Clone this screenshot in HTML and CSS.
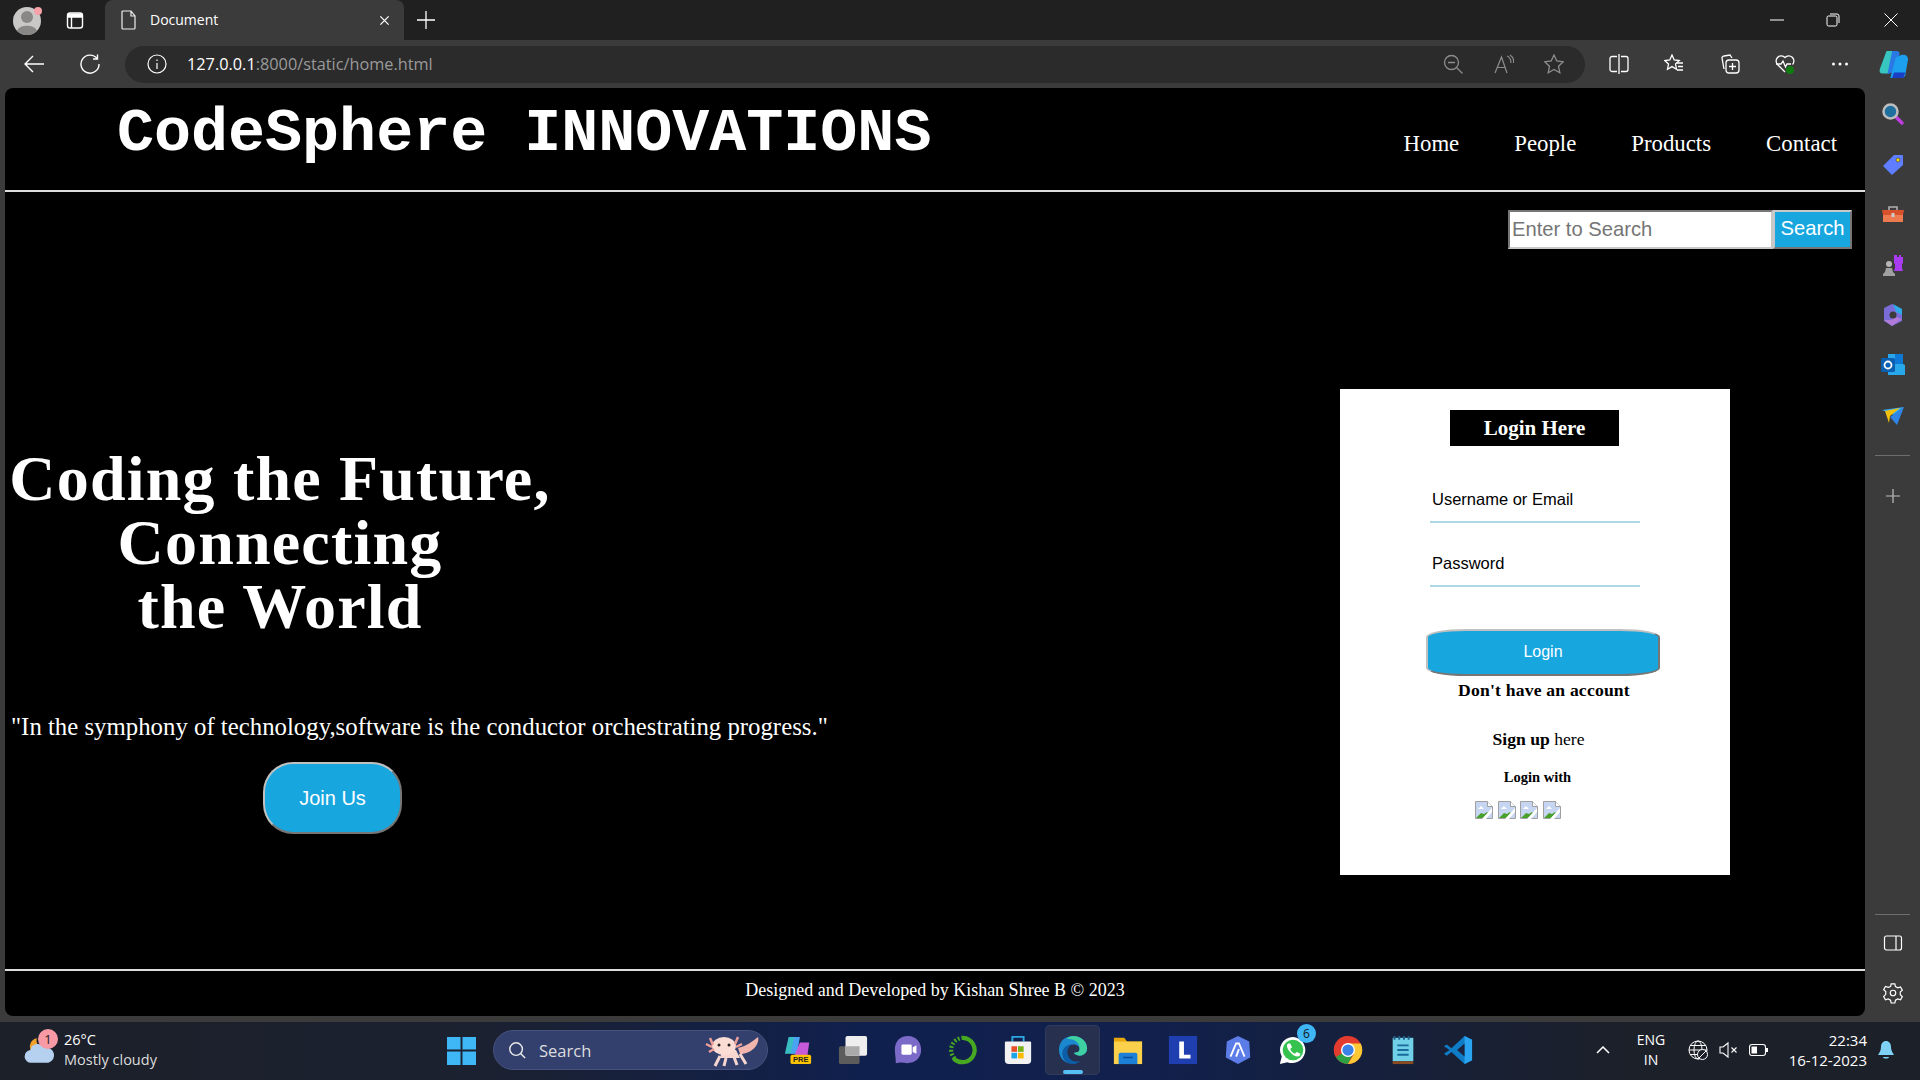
FILE: index.html
```html
<!DOCTYPE html>
<html lang="en">
<head>
<meta charset="utf-8">
<title>Document</title>
<link rel="stylesheet" href="styles.css">
</head>
<body>
<div class="desktop">
  <div class="tabstrip">
    <svg class="avatar" viewBox="0 0 30 30"><circle cx="14" cy="16" r="14" fill="#c9c8c6"/><circle cx="14" cy="12" r="6" fill="#8a8886"/><path d="M4 26c2-7 18-7 20 0a14 14 0 0 1-20 0z" fill="#8a8886"/><circle cx="25" cy="6" r="4" fill="#f7a1a8"/></svg>
    <svg class="ico tabs-ico" viewBox="0 0 20 20" fill="none" stroke="#fff" stroke-width="1.4"><rect x="2.5" y="3" width="15" height="15" rx="2.5"/><path d="M6.5 7v11M2.5 7h15" /><path d="M3 3.5h14v3.5H3z" fill="#fff" stroke="none"/></svg>
    <div class="tab">
      <svg class="ico16" viewBox="0 0 16 20" fill="none" stroke="#eee" stroke-width="1.2"><path d="M2 1h8l4 5v12a1 1 0 0 1-1 1H2a1 1 0 0 1-1-1V2a1 1 0 0 1 1-1zM10 1v5h4"/></svg>
      <span class="tab-title">Document</span>
      <svg class="tab-x" viewBox="0 0 12 12" fill="none" stroke="#fff" stroke-width="1.4"><path d="M1.5 1.5l9 9M10.5 1.5l-9 9"/></svg>
    </div>
    <svg class="newtab" viewBox="0 0 18 18" fill="none" stroke="#fff" stroke-width="1.3"><path d="M9 0v18M0 9h18"/></svg>
    <div class="winctl">
      <svg viewBox="0 0 14 14" fill="none" stroke="#fff"><path d="M0 7h14"/></svg>
      <svg viewBox="0 0 14 14" fill="none" stroke="#fff"><rect x="1" y="3" width="10" height="10" rx="1.5"/><path d="M4 1h7a2 2 0 0 1 2 2v7"/></svg>
      <svg viewBox="0 0 14 14" fill="none" stroke="#fff"><path d="M.5.5l13 13M13.5.5l-13 13"/></svg>
    </div>
  </div>

  <div class="toolbar">
    <svg class="ico back" viewBox="0 0 20 20" fill="none" stroke="#fff" stroke-width="1.4"><path d="M20 10H1M9 2l-8 8 8 8"/></svg>
    <svg class="ico reload" viewBox="0 0 20 20" fill="none" stroke="#fff" stroke-width="1.4"><path d="M17 4.5A9 9 0 1 0 19 10M17.500 .5v4.500H13"/></svg>
    <div class="address">
      <svg class="ico info" viewBox="0 0 20 20" fill="none" stroke="#fff" stroke-width="1.2"><circle cx="10" cy="10" r="9"/><path d="M10 9v6M10 5.500v1.500"/></svg>
      <span class="url"><span class="url-host">127.0.0.1</span>:8000/static/home.html</span>
      <div class="addr-right">
        <svg class="ico" viewBox="0 0 20 20" fill="none" stroke="#8d8d8d" stroke-width="1.3"><circle cx="8.500" cy="8.500" r="7"/><path d="M5 8.500h7M13.500 13.500l6 6"/></svg>
        <svg class="ico" viewBox="0 0 20 20" fill="none" stroke="#8d8d8d" stroke-width="1.2"><path d="M1 19L7.500 3 13 19M3.500 13.500h8M13 2c3 1 4 4 4 7M16 1c3 2 4 5 3.500 8"/></svg>
        <svg class="ico" viewBox="0 0 20 20" fill="none" stroke="#8d8d8d" stroke-width="1.3"><path d="M10 1l2.800 6 6.500.8-4.800 4.400 1.300 6.500L10 15.400l-5.800 3.300 1.300-6.500L.7 7.800 7.200 7z"/></svg>
      </div>
    </div>
    <div class="tools">
      <svg class="ico" viewBox="0 0 20 20" fill="none" stroke="#fff" stroke-width="1.3"><rect x="1" y="2.500" width="18" height="15" rx="2"/><path d="M10 0v20" stroke="#3b3b3b" stroke-width="4"/><path d="M10 0v20"/></svg>
      <svg class="ico" viewBox="0 0 20 20" fill="none" stroke="#fff" stroke-width="1.3"><path d="M8 1l2.200 5 5 .6-3.700 3.400 1 5.200L8 12.600l-4.500 2.600 1-5.200L.8 6.600l5-.6z"/><path d="M13 9h6M14 12.500h5M13 16h6"/></svg>
      <svg class="ico" viewBox="0 0 20 20" fill="none" stroke="#fff" stroke-width="1.3"><path d="M4 15L2 4a2 2 0 0 1 2-2l6-1 2 3"/><rect x="6" y="6" width="13" height="13" rx="3"/><path d="M12.500 9v7M9 12.500h7"/></svg>
      <svg class="ico" viewBox="0 0 20 20" fill="none" stroke="#fff" stroke-width="1.3"><path d="M10 18L2.500 10.500a5 5 0 0 1 7.500-7 5 5 0 0 1 7.500 7"/><path d="M1 10h5l2-3 2.500 6L12 10h4"/><circle cx="15" cy="16" r="4" fill="#107c10" stroke="none"/></svg>
      <svg class="ico" viewBox="0 0 20 20" fill="#fff"><circle cx="3.500" cy="10" r="1.500"/><circle cx="10" cy="10" r="1.500"/><circle cx="16.500" cy="10" r="1.500"/></svg>
      <svg class="copilot" viewBox="0 0 32 32"><path d="M8 2h10l-8 24H3C1 26 0 24 1 21z" fill="#37c6c0"/><path d="M14 2h5c2 0 3 1 3 3l-5 19-8 3z" fill="#2a78e4"/><path d="M24 6h2c3 0 5 2 5 5l-3 17c-1 2-2 3-4 3H12l6-22z" fill="#1c9fef"/><path d="M14 31h12l2-6H16z" fill="#1b3fc4"/></svg>
    </div>
  </div>

  <div class="workspace">
    <div class="page">
      <header class="site-header">
        <h1 class="brand">CodeSphere INNOVATIONS</h1>
        <nav class="site-nav"><a>Home</a><a>People</a><a>Products</a><a>Contact</a></nav>
      </header>
      <div class="search-row">
        <span class="search-input">Enter to Search</span><span class="search-btn">Search</span>
      </div>
      <main class="hero-row">
        <section class="hero">
          <h2 class="hero-title">Coding the Future,<br>Connecting<br>the World</h2>
          <p class="hero-quote">"In the symphony of technology,software is the conductor orchestrating progress."</p>
          <span class="join">Join Us</span>
        </section>
        <aside class="login">
          <h3 class="login-title">Login Here</h3>
          <div class="field">Username or Email</div>
          <div class="field">Password</div>
          <div class="login-btn">Login</div>
          <p class="no-account">Don't have an account</p>
          <p class="signup"><b>Sign up</b> here</p>
          <p class="login-with">Login with</p>
          <div class="socials">
            <svg class="broken" viewBox="0 0 18 18"><path d="M.5.500h12l5 5v12H.5z" fill="#c6d6f2" stroke="#a0a0a0"/><path d="M12.500.5v5h5" fill="#fff" stroke="#a0a0a0"/><path d="M3 8l3-3 3 3z" fill="#fff"/><path d="M1 17l5-5 3 1 3-2 1 1-5 5z" fill="#4aa02c"/><path d="M17 7L7 18h4l6-7z" fill="#fff"/></svg>
            <svg class="broken" viewBox="0 0 18 18"><path d="M.5.500h12l5 5v12H.5z" fill="#c6d6f2" stroke="#a0a0a0"/><path d="M12.500.5v5h5" fill="#fff" stroke="#a0a0a0"/><path d="M3 8l3-3 3 3z" fill="#fff"/><path d="M1 17l5-5 3 1 3-2 1 1-5 5z" fill="#4aa02c"/><path d="M17 7L7 18h4l6-7z" fill="#fff"/></svg>
            <svg class="broken" viewBox="0 0 18 18"><path d="M.5.500h12l5 5v12H.5z" fill="#c6d6f2" stroke="#a0a0a0"/><path d="M12.500.5v5h5" fill="#fff" stroke="#a0a0a0"/><path d="M3 8l3-3 3 3z" fill="#fff"/><path d="M1 17l5-5 3 1 3-2 1 1-5 5z" fill="#4aa02c"/><path d="M17 7L7 18h4l6-7z" fill="#fff"/></svg>
            <svg class="broken" viewBox="0 0 18 18"><path d="M.5.500h12l5 5v12H.5z" fill="#c6d6f2" stroke="#a0a0a0"/><path d="M12.500.5v5h5" fill="#fff" stroke="#a0a0a0"/><path d="M3 8l3-3 3 3z" fill="#fff"/><path d="M1 17l5-5 3 1 3-2 1 1-5 5z" fill="#4aa02c"/><path d="M17 7L7 18h4l6-7z" fill="#fff"/></svg>
          </div>
        </aside>
      </main>
      <footer class="site-footer">Designed and Developed by Kishan Shree B © 2023</footer>
    </div>
    <aside class="sidebar">
      <svg class="side-ico" viewBox="0 0 24 24"><path d="M14 14l7 7" stroke="#c03ee0" stroke-width="3.500" stroke-linecap="round"/><circle cx="9.500" cy="9.500" r="7" fill="#1f6f9f" stroke="#bdbdbd" stroke-width="2.500"/></svg>
      <svg class="side-ico" viewBox="0 0 24 24"><path d="M2 14L13 3h8a1 1 0 0 1 1 1v9L11 23z" fill="#5f7dff"/><circle cx="17" cy="8" r="2" fill="#f5d90a" stroke="#333" stroke-width=".6"/></svg>
      <svg class="side-ico" viewBox="0 0 24 24"><path d="M8 7V4h8v3" fill="none" stroke="#b0b0b0" stroke-width="1.600"/><path d="M1 7h22l-1 5H2z" fill="#d9502c"/><path d="M2 12h20v7H2z" fill="#ee7b50"/><rect x="10.500" y="10" width="3" height="4" fill="#ccc"/></svg>
      <svg class="side-ico" viewBox="0 0 24 24"><circle cx="8" cy="11" r="3" fill="#b5b5b5"/><path d="M5 15h6l1 4 2 2v2H2v-2l2-2z" fill="#a0a0a0"/><path d="M14 2h2v2h2V2h2v2h2V2v8l-1 1v4l1 3H13l1-3v-4l-1-1V2z" fill="#a93cf0"/></svg>
      <svg class="side-ico" viewBox="0 0 24 24"><path d="M11 1L3 5v13l8 5 10-5V7z" fill="#7a6cd6"/><path d="M12 1l9 5v6l-6-3z" fill="#2fa9e8"/><path d="M3 17l8 6 10-7-6-2-5 3z" fill="#b07ad8"/><circle cx="12" cy="12" r="3.500" fill="#3b3b3b"/></svg>
      <svg class="side-ico" viewBox="0 0 24 24"><path d="M7 1h15v10l2 1v10H7z" fill="#28a8ea"/><path d="M14 1h8v10h-8z" fill="#0f78d4"/><rect x="0" y="5" width="14" height="14" rx="1.500" fill="#0a5fb0"/><circle cx="7" cy="12" r="3.500" fill="none" stroke="#fff" stroke-width="1.800"/></svg>
      <svg class="side-ico" viewBox="0 0 24 24"><path d="M1 6l22-3-10 8z" fill="#36a9f0"/><path d="M23 3L16 21 9 13z" fill="#2f86e6"/><path d="M4 7l15-3-10 8-1 7z" fill="#f4c20d"/></svg>
      <div class="side-sep"></div>
      <svg class="side-plus" viewBox="0 0 16 16" fill="none" stroke="#c0c0c0" stroke-width="1.200"><path d="M8 1v14M1 8h14"/></svg>
      <div class="side-sep side-sep-bottom"></div>
      <svg class="side-bt" viewBox="0 0 20 20" fill="none" stroke="#fff" stroke-width="1.200"><rect x="1.500" y="3" width="17" height="14" rx="2"/><path d="M13 3v14"/></svg>
      <svg class="side-bt side-gear" viewBox="0 0 24 24" fill="none" stroke="#fff" stroke-width="1.300"><circle cx="12" cy="12" r="3"/><path d="M10 2h4l.7 3 2.500 1.400 3-1 2 3.500-2.300 2.100v2.900l2.300 2.100-2 3.500-3-1-2.500 1.400-.7 3h-4l-.7-3-2.500-1.400-3 1-2-3.500L4.100 13.400v-2.900L1.800 8.400l2-3.500 3 1L9.300 5z"/></svg>
    </aside>
  </div>

  <div class="taskbar">
    <div class="weather">
      <svg class="weather-ico" viewBox="0 0 32 32"><path d="M7 16a8 8 0 0 1 6-11 8 8 0 0 0 8 10z" fill="#f0a32c"/><path d="M8 28a6 6 0 0 1-1-12 7 7 0 0 1 13-2 6 6 0 0 1 4 14z" fill="#b6d0ef"/></svg>
      <span class="badge">1</span>
      <div class="weather-text"><span class="temp">26°C</span><span class="cond">Mostly cloudy</span></div>
    </div>
    <div class="tb-center">
      <svg class="start" viewBox="0 0 30 30"><path d="M0 1h14v13H0zM16 1h14v13H16zM0 16h14v14H0zM16 16h14v14H16z" fill="#3fb6f5"/></svg>
      <div class="tb-search">
        <svg class="tb-search-ico" viewBox="0 0 20 20" fill="none" stroke="#e8e8e8" stroke-width="1.600"><circle cx="9" cy="9" r="7"/><path d="M14 14l5 5"/></svg>
        <span>Search</span>
        <svg class="axolotl" viewBox="0 0 56 36"><path d="M34 16C42 14 48 10 54 5 56 12 48 22 36 22z" fill="#f2b5ae"/><path d="M16 24l-5 10M22 26l-2 8M30 25l3 8M36 22l6 10" stroke="#f7d6cf" stroke-width="3"/><path d="M18 18l14 0 4 8H16z" fill="#f7d6cf"/><ellipse cx="20" cy="14" rx="12" ry="9" fill="#fbdcd4"/><path d="M6 6l3 7M2 12l6 3M5 20l5-3M34 5l-3 7M38 12l-6 3" stroke="#ee9f98" stroke-width="2.500"/><circle cx="15" cy="13" r="1.500" fill="#222"/><circle cx="25" cy="13" r="1.500" fill="#222"/></svg>
      </div>
      <div class="apps">
        <span class="app"><svg viewBox="0 0 32 32"><path d="M6 2h10l-4 18H2z" fill="#38bdc2"/><path d="M12 2h6l-3 18H8z" fill="#4aa3f0"/><path d="M18 8h10l-2 14H12z" fill="#c65ad8"/><rect x="8" y="21" width="22" height="10" rx="2" fill="#ffc300"/><text x="19" y="29" class="pre">PRE</text></svg></span>
        <span class="app"><svg viewBox="0 0 32 32"><rect x="1" y="12" width="22" height="19" rx="2" fill="#5c5c5c"/><rect x="8" y="1" width="23" height="21" rx="2" fill="#eee"/><rect x="8" y="12" width="15" height="10" fill="#aaa"/></svg></span>
        <span class="app"><svg viewBox="0 0 32 32"><path d="M16 1C7 1 2 7 2 16c0 4 1 8 1 14 4-1 7-1 12 0 9 0 15-6 15-14S25 1 16 1z" fill="#7b6ac8"/><rect x="9" y="10" width="11" height="11" rx="1.500" fill="#fff"/><path d="M21 13l4-2v9l-4-2z" fill="#fff"/></svg></span>
        <span class="app"><svg viewBox="0 0 32 32" fill="none"><path d="M16 3a13 13 0 1 1-10 22" stroke="#47a822" stroke-width="4.500"/><path d="M7 25A13 13 0 0 1 16 3" stroke="#47a822" stroke-width="4.500" stroke-dasharray="2 2"/></svg></span>
        <span class="app"><svg viewBox="0 0 32 32"><path d="M10 7V2h12v5" fill="none" stroke="#2ea8e0" stroke-width="2"/><path d="M3 7h26a1 1 0 0 1 1 1v19a4 4 0 0 1-4 4H6a4 4 0 0 1-4-4V8a1 1 0 0 1 1-1z" fill="#f2f2f2"/><rect x="9" y="12" width="6" height="6" fill="#e8502a"/><rect x="16" y="12" width="6" height="6" fill="#78b21a"/><rect x="9" y="19" width="6" height="6" fill="#1ea5e8"/><rect x="16" y="19" width="6" height="6" fill="#fcb900"/></svg></span>
        <span class="app app-active"><svg viewBox="0 0 32 32"><path d="M1 16C1 6 8 1 16 1c9 0 15 6 15 13 0 5-4 8-8 8-3 0-6-2-6-3 3 0 6-1 6-4s-3-5-7-5C9 10 5 14 5 20c0 6 5 11 11 11C8 31 1 25 1 16z" fill="#1b87cf"/><path d="M16 1c9 0 15 6 15 13 0 5-4 8-8 8-3 0-6-2-6-3 3 0 6-1 6-4C23 8 18 4 9 4c2-2 5-3 7-3z" fill="#3ed0a0"/><path d="M5 20c0-6 4-10 10-10-4 2-5 5-5 8 0 6 5 12 14 10-3 2-5 3-8 3-6 0-11-5-11-11z" fill="#0c5ea8"/></svg></span>
        <span class="app"><svg viewBox="0 0 32 32"><path d="M1 3h11l3 4h16v24H1z" fill="#e8a80c"/><path d="M1 7h30v24H1z" fill="#fbd04b"/><path d="M8 19h16a2 2 0 0 1 2 2v10H6V21a2 2 0 0 1 2-2z" fill="#1c80d8"/><path d="M11 24h10" stroke="#0c4a90" stroke-width="1.500"/></svg></span>
        <span class="app"><svg viewBox="0 0 32 32"><rect x="1" y="1" width="30" height="30" fill="#1f3fb0"/><path d="M12 7h5v14h7v4H12z" fill="#fff"/></svg></span>
        <span class="app"><svg viewBox="0 0 32 32"><path d="M16 1l12 6 1 17-13 7-13-7 1-17z" fill="#5c7de8"/><path d="M8 23l6-14h3l6 14M14 23l3-8" fill="none" stroke="#fff" stroke-width="2"/></svg></span>
        <span class="app"><svg viewBox="0 0 32 32"><path d="M16 2a14 14 0 0 0-12 21L2 31l8-2A14 14 0 1 0 16 2z" fill="#fff"/><circle cx="16" cy="16" r="11" fill="#35c24f"/><path d="M11 9c-2 1-2 4 1 8s6 6 9 6c2 0 3-2 3-3l-4-2-2 2c-3-1-4-3-5-5l2-2-2-4z" fill="#fff"/></svg><span class="wa-badge">6</span></span>
        <span class="app"><svg viewBox="0 0 32 32"><circle cx="16" cy="16" r="15" fill="#e33b2e"/><path d="M16 16L3 23.500A15 15 0 0 0 16 31l6-13z" fill="#2ea044"/><path d="M16 9h13.500A15 15 0 0 1 16 31l6.500-11z" fill="#fcc934"/><path d="M16 1a15 15 0 0 0-13 22.500L9.500 12z" fill="#e33b2e"/><circle cx="16" cy="16" r="7.500" fill="#fff"/><circle cx="16" cy="16" r="6" fill="#3b82e8"/></svg></span>
        <span class="app"><svg viewBox="0 0 32 32"><rect x="5" y="3" width="22" height="25" fill="#6fd0e8"/><rect x="5" y="28" width="22" height="3" fill="#8a4b20"/><path d="M7 1v4M12 1v4M17 1v4M22 1v4" stroke="#1f5f88" stroke-width="2"/><path d="M10 11h12M10 16h12M10 21h12" stroke="#1a6a9a" stroke-width="2"/></svg></span>
        <span class="app"><svg viewBox="0 0 32 32"><path d="M23 1l8 4v22l-8 4L9 18l-5 4-3-2 6-4-6-4 3-2 5 4z" fill="#0f7cc8"/><path d="M23 1l8 4v22l-8 4z" fill="#2aa4f0"/><path d="M23 9l-8 7 8 7z" fill="#1a2440"/></svg></span>
      </div>
    </div>
    <div class="tray">
      <svg class="tray-caret" viewBox="0 0 14 8" fill="none" stroke="#fff" stroke-width="1.500"><path d="M1 7l6-6 6 6"/></svg>
      <div class="lang"><span>ENG</span><span>IN</span></div>
      <svg class="tray-ico" viewBox="0 0 20 20" fill="none" stroke="#fff" stroke-width="1"><circle cx="10" cy="10" r="9"/><ellipse cx="10" cy="10" rx="4" ry="9"/><path d="M1 10h18M2 5.500h16M2 14.500h16"/><circle cx="14.500" cy="14.500" r="5" fill="#1c202a"/><path d="M11 18l7-7"/></svg>
      <svg class="tray-ico tray-mute" viewBox="0 0 20 20" fill="none" stroke="#fff" stroke-width="1.100"><path d="M1 7h3l5-4v14l-5-4H1zM12.500 7.500l5 5M17.500 7.500l-5 5"/></svg>
      <svg class="tray-ico tray-bat" viewBox="0 0 20 20" fill="none" stroke="#fff" stroke-width="1.100"><rect x=".5" y="4.500" width="16" height="11" rx="2.500"/><rect x="2.500" y="6.500" width="5.500" height="7" fill="#fff" stroke="none"/><path d="M18 8v4" stroke-width="2"/></svg>
      <div class="clock"><span>22:34</span><span>16-12-2023</span></div>
      <svg class="bell" viewBox="0 0 18 20"><path d="M9 1c-3 0-5 2.500-5 6 0 4-2 6-3 8h16c-1-2-3-4-3-8 0-3.500-2-6-5-6z" fill="#7fd0f5"/><path d="M6 17h6c0 2-6 2-6 0z" fill="#7fd0f5"/></svg>
    </div>
  </div>
</div>
</body>
</html>
```
FILE: styles.css
```css
* { box-sizing: border-box; }
html, body { margin: 0; padding: 0; height: 100%; overflow: hidden; background: #3b3b3b; }
h1, h2, h3, p { margin: 0; }
svg { display: block; flex: none; }

.desktop { display: flex; flex-direction: column; width: 1920px; height: 1080px; }

/* browser tab strip */
.tabstrip { display: flex; align-items: center; height: 40px; background: #202020; font-family: "Open Sans", "Noto Sans", sans-serif; color: #fff; }
.avatar { width: 30px; height: 30px; margin-left: 13px; }
.ico { width: 20px; height: 20px; }
.tabs-ico { width: 20px; height: 20px; margin-left: 22px; }
.ico16 { width: 16px; height: 20px; }
.tab { display: flex; align-items: center; width: 299px; height: 40px; margin-left: 20px; padding: 0 14px 0 16px; background: #3b3b3b; border-radius: 8px 8px 0 0; }
.tab-title { margin-left: 13px; margin-top: -2px; font-size: 14px; }
.tab-x { width: 11px; height: 11px; margin-left: auto; }
.newtab { width: 18px; height: 18px; margin-left: 13px; }
.winctl { display: flex; gap: 44px; margin-left: auto; padding-right: 22px; }
.winctl svg { width: 14px; height: 14px; }
.winctl svg:first-child { margin-right: -2px; }

/* browser toolbar */
.toolbar { display: flex; align-items: center; height: 48px; background: #3b3b3b; }
.back { margin-left: 24px; }
.reload { margin-left: 36px; }
.address { display: flex; align-items: center; width: 1460px; height: 37px; margin: 0 0 0 25px; padding: 0 21px 0 22px; background: #2b2b2b; border-radius: 19px; }
.url { margin-left: 20px; font-family: "Open Sans", "Noto Sans", sans-serif; font-size: 16.300px; color: #9a9a9a; }
.url-host { color: #fff; }
.addr-right { display: flex; gap: 30.500px; margin-left: auto; }
.tools { display: flex; align-items: center; gap: 35.300px; margin-left: 24px; }
.copilot { width: 30px; height: 30px; margin-left: -6px; }

/* workspace */
.workspace { display: flex; height: 934px; padding-left: 5px; }
.page { display: flex; flex-direction: column; width: 1860px; height: 928px; background: #000; border-radius: 8px; color: #fff; overflow: hidden; }

.site-header { display: flex; justify-content: space-between; height: 104px; padding: 0 28px 0 112px; border-bottom: 2px solid #ddd; }
.brand { font-family: "Liberation Mono", monospace; font-weight: 700; font-size: 61.700px; line-height: 70px; padding-top: 11px; }
.site-nav { display: flex; gap: 55px; padding-top: 43px; font-family: "Liberation Serif", serif; font-size: 22.800px; line-height: 26px; }

.search-row { display: flex; justify-content: flex-end; height: 57px; padding: 18px 13px 0 0; font-family: "Liberation Sans", sans-serif; font-size: 20.200px; }
.search-input { width: 265px; height: 39px; padding: 0 2px; background: #fff; color: #757575; line-height: 35px; border: 2px solid; border-color: #767676 #c8c8c8 #c8c8c8 #767676; }
.search-btn { width: 79px; height: 39px; background: #18a6df; color: #fff; text-align: center; line-height: 33px; border: 2px solid; border-color: #c8c8c8 #767676 #767676 #c8c8c8; }

.hero-row { display: flex; justify-content: space-between; flex: 1; padding-right: 135px; }
.hero { width: 550px; padding-top: 198px; font-family: "Liberation Serif", serif; }
.hero-title { font-size: 64px; font-weight: 700; letter-spacing: 1.200px; line-height: 64px; text-align: center; }
.hero-quote { margin: 73px 0 0 6px; font-size: 24.800px; line-height: 30px; white-space: nowrap; }
.join { display: block; width: 139px; height: 72px; margin: 20px 0 0 258px; background: #18a6df; border: 2px solid; border-color: #c0c0c0 #767676 #767676 #c0c0c0; border-radius: 30px; font-family: "Liberation Sans", sans-serif; font-size: 20px; line-height: 68px; text-align: center; }

/* login card */
.login { display: flex; flex-direction: column; width: 390px; height: 486px; margin-top: 140px; padding-top: 21px; background: #fff; color: #000; font-family: "Liberation Serif", serif; }
.login-title { width: 169px; height: 36px; margin-left: 110px; background: #000; color: #fff; font-size: 21px; font-weight: 700; line-height: 36px; text-align: center; }
.field { width: 210px; height: 45px; margin: 32px 0 0 90px; padding: 0 2px; border-bottom: 2px solid #add8e6; font-family: "Liberation Sans", sans-serif; font-size: 16.500px; line-height: 43px; }
.field + .field { margin-top: 19px; }
.login-btn { width: 234px; height: 47px; margin: 42px 0 0 86px; background: #18a6df; border: 2px solid; border-color: #c0c0c0 #767676 #767676 #c0c0c0; border-radius: 40px / 8px; color: #fff; font-family: "Liberation Sans", sans-serif; font-size: 16px; line-height: 42px; text-align: center; }
.no-account { margin: 4px 0 0 0; padding-left: 18px; text-align: center; font-size: 17.600px; font-weight: 700; line-height: 21px; letter-spacing: .2px; }
.signup { margin-top: 28px; padding-left: 7px; text-align: center; font-size: 17.600px; line-height: 21px; }
.login-with { margin-top: 19px; padding-left: 5px; text-align: center; font-size: 14.500px; font-weight: 700; line-height: 17px; }
.socials { display: flex; gap: 4.500px; margin: 15px 0 0 135px; }
.broken { width: 18px; height: 18px; }

.site-footer { height: 47px; margin-top: auto; border-top: 2px solid #ddd; font-family: "Liberation Serif", serif; font-size: 18px; line-height: 38px; text-align: center; }

/* sidebar */
.sidebar { display: flex; flex-direction: column; align-items: center; width: 55px; height: 928px; padding-top: 14px; }
.side-ico { width: 24px; height: 24px; margin-bottom: 26.300px; }
.side-sep { width: 35px; height: 1px; margin-top: 1px; background: #6e6e6e; }
.side-plus { width: 16px; height: 16px; margin-top: 32px; }
.side-sep-bottom { margin-top: 410px; }
.side-bt { width: 20px; height: 20px; margin-top: 18px; }
.side-gear { width: 22px; height: 22px; margin-top: 29px; }

/* taskbar */
.taskbar { display: flex; align-items: center; height: 58px; padding-bottom: 2px; background: linear-gradient(90deg, #1c2029 0, #1b2130 25%, #10204e 45%, #11204c 60%, #1c2029 85%); color: #fff; font-family: "Open Sans", "Noto Sans", sans-serif; }
.weather { position: relative; display: flex; align-items: center; width: 434px; padding-left: 23px; }
.weather-ico { width: 34px; height: 34px; }
.badge { position: absolute; left: 38px; top: -1px; width: 20px; height: 20px; background: #f79aa5; border-radius: 50%; color: #222; font-size: 13px; line-height: 20px; text-align: center; }
.weather-text { display: flex; flex-direction: column; margin-left: 7px; font-size: 14.500px; line-height: 20px; }
.cond { color: #ddd; }
.tb-center { display: flex; align-items: center; padding-left: 13px; }
.start { width: 29px; height: 29px; }
.tb-search { display: flex; align-items: center; width: 275px; height: 40px; margin-left: 17px; padding-left: 14px; background: #33406e; border: 1px solid #46517c; border-radius: 20px; color: #ddd; font-size: 16.500px; }
.tb-search-ico { width: 18px; height: 18px; margin-right: 13px; }
.axolotl { width: 56px; height: 36px; margin-left: auto; margin-right: 7px; }
.apps { display: flex; margin-left: 2px; }
.app { position: relative; display: flex; align-items: center; justify-content: center; width: 55px; height: 50px; }
.app svg { width: 30px; height: 30px; }
.app-active { background: #27304f; border-radius: 5px; box-shadow: inset 0 0 0 1px #303a5c; }
.app-active::after { content: ""; position: absolute; left: 18px; bottom: 1px; width: 20px; height: 4px; border-radius: 2px; background: #56c0f5; }
.pre { font: 700 8px "Liberation Sans", sans-serif; fill: #222; text-anchor: middle; }
.wa-badge { position: absolute; right: 4px; top: -1px; width: 19px; height: 19px; background: #3fb6f5; border-radius: 50%; color: #111; font-size: 12px; line-height: 19px; text-align: center; }
.tray { display: flex; align-items: center; margin-left: 111px; }
.tray-caret { width: 14px; height: 8px; }
.lang { display: flex; flex-direction: column; align-items: center; width: 36px; margin-left: 23px; font-size: 14px; line-height: 20px; }
.tray-ico { width: 20px; height: 20px; margin-left: 19px; }
.tray-mute { margin-left: 11px; }
.tray-bat { margin-left: 10px; }
.clock { display: flex; flex-direction: column; align-items: flex-end; width: 98px; font-size: 15px; line-height: 20px; }
.bell { width: 18px; height: 20px; margin-left: 10px; }
```
